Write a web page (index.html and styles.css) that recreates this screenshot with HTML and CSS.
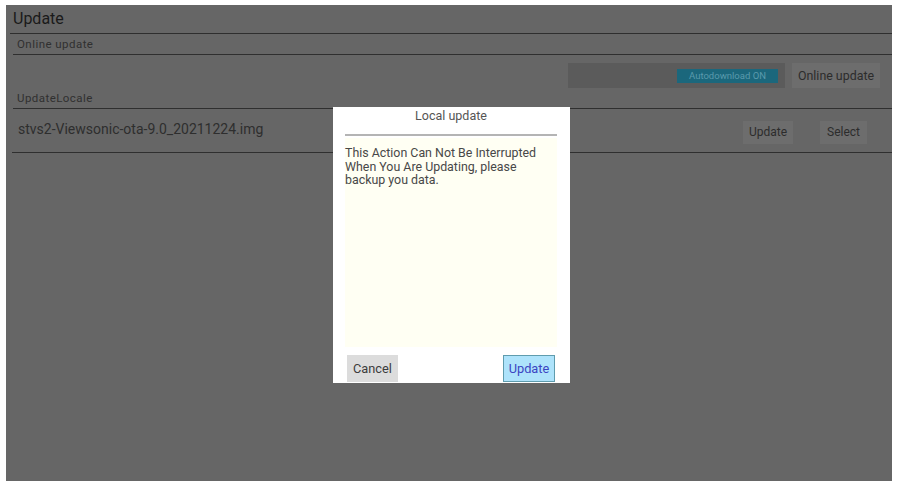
FILE: index.html
```html
<!DOCTYPE html>
<html>
<head>
<meta charset="utf-8">
<link rel="stylesheet" href="styles.css">
</head>
<body>
<div class="screen">
  <div class="title">Update</div>
  <div class="section-head">Online update</div>
  <div class="online-row">
    <div class="status-bar"><span class="badge">Autodownload ON</span></div>
    <div class="btn btn-online">Online update</div>
  </div>
  <div class="section-head">UpdateLocale</div>
  <div class="local-row">
    <div class="file">stvs2-Viewsonic-ota-9.0_20211224.img</div>
    <div class="local-btns">
      <div class="btn btn-upd">Update</div>
      <div class="btn btn-sel">Select</div>
    </div>
  </div>

  <div class="dialog">
    <div class="dlg-title">Local update</div>
    <div class="dlg-rule"></div>
    <div class="dlg-body">This Action Can Not Be Interrupted When You Are Updating, please backup you data.</div>
    <div class="dlg-actions">
      <div class="dbtn dbtn-cancel">Cancel</div>
      <div class="dbtn dbtn-update">Update</div>
    </div>
  </div>
</div>
</body>
</html>
```

FILE: styles.css
```css
html, body {
  margin: 0;
  padding: 0;
  background: #ffffff;
}
body {
  width: 898px;
  height: 484px;
  overflow: hidden;
  font-family: Roboto, "Noto Sans", Arial, sans-serif;
}
.screen {
  position: relative;
  margin: 5px 0 0 6px;
  width: 886px;
  height: 476px;
  background: #666666;
  box-sizing: border-box;
}
.title {
  height: 28px;
  margin-left: 4px;
  padding-left: 3px;
  font-size: 16px;
  line-height: 27px;
  color: #1a1a1a;
  border-bottom: 1px solid #2e2e2e;
}
.section-head {
  margin-left: 7px;
  padding-left: 4px;
  height: 20px;
  font-size: 11.5px;
  letter-spacing: 0.45px;
  line-height: 20px;
  color: #303030;
  border-bottom: 1px solid #2f2f2f;
}
.online-row {
  display: flex;
  justify-content: flex-end;
  align-items: flex-start;
  gap: 7px;
  height: 33px;
  padding-right: 12px;
  box-sizing: border-box;
}
.status-bar {
  margin-top: 8px;
  width: 217px;
  height: 25px;
  background: #5b5b5b;
  display: flex;
  justify-content: flex-end;
  align-items: center;
  padding-right: 7px;
  box-sizing: border-box;
}
.badge {
  width: 101px;
  height: 14px;
  background: #1b677c;
  color: #5a9aac;
  font-size: 9.5px;
  line-height: 14px;
  text-align: center;
  white-space: nowrap;
}
.btn {
  background: #6d6d6d;
  color: #2c2c2c;
  font-size: 12px;
  display: flex;
  align-items: center;
  justify-content: center;
  white-space: nowrap;
}
.btn-online {
  margin-top: 8px;
  width: 88px;
  height: 25px;
  font-size: 12.4px;
}
.local-row {
  margin-left: 6px;
  height: 43px;
  border-bottom: 1px solid #2f2f2f;
  display: flex;
  align-items: center;
  justify-content: space-between;
}
.file {
  padding-left: 6px;
  font-size: 14px;
  color: #2e2e2e;
  margin-top: -3px;
}
.local-btns {
  display: flex;
  gap: 27px;
  padding-right: 25px;
  margin-top: 3px;
}
.btn-upd {
  width: 50px;
  height: 23px;
}
.btn-sel {
  width: 47px;
  height: 23px;
}

/* dialog overlay */
.dialog {
  position: absolute;
  left: 327px;
  top: 102px;
  width: 237px;
  height: 276px;
  background: #ffffff;
  display: flex;
  flex-direction: column;
  padding: 0 13px 0 12px;
  box-sizing: border-box;
}
.dlg-title {
  height: 17px;
  padding-top: 2px;
  text-align: center;
  font-size: 12.5px;
  line-height: 14px;
  color: #555555;
}
.dlg-rule {
  margin-top: 8px;
  height: 2px;
  background: #b4b4b4;
}
.dlg-body {
  margin-top: 2px;
  height: 209px;
  background: #fffff3;
  padding-top: 8px;
  padding-right: 8px;
  box-sizing: border-box;
  font-size: 12.4px;
  line-height: 13.5px;
  color: #484848;
}
.dlg-actions {
  display: flex;
  justify-content: space-between;
  margin-top: 8px;
  padding-left: 2px;
  padding-right: 2px;
}
.dbtn {
  height: 27px;
  display: flex;
  align-items: center;
  justify-content: center;
  font-size: 12.8px;
  box-sizing: border-box;
}
.dbtn-cancel {
  width: 51px;
  background: #dcdcdc;
  color: #3c3c3c;
}
.dbtn-update {
  width: 52px;
  background: #aee3fb;
  border: 1px solid #5f9cae;
  color: #3b45c2;
}
```
